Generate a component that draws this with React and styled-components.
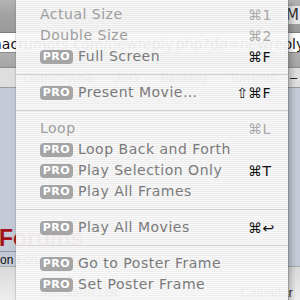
import React from 'react';
import styled, { createGlobalStyle } from 'styled-components';

const Global = createGlobalStyle`
  html, body { margin: 0; padding: 0; background: #c3cad6; }
  body { font-family: "DejaVu Sans", "Liberation Sans", sans-serif; }
`;

const Screen = styled.div`
  position: relative;
  width: 300px;
  height: 300px;
  overflow: hidden;
`;

const Browser = styled.div`
  display: flex;
  flex-direction: column;
  width: 300px;
  height: 300px;
`;

const Toolbar = styled.div`
  height: 32px;
  box-sizing: border-box;
  padding-top: 6px;
  display: flex;
  justify-content: flex-end;
  align-items: flex-start;
  background: linear-gradient(to bottom, #b4b4b4 0%, #a2a2a2 45%, #9a9a9a 100%);
`;

const SearchField = styled.div`
  width: 14px;
  height: 18px;
  overflow: hidden;
  background: #e6e6e6;
  color: #333;
  font-size: 15px;
  line-height: 18px;
  padding-left: 1px;
`;

const UrlRow = styled.div`
  height: 21px;
  box-sizing: border-box;
  background: #ffffff;
  border-top: 1px solid #7e7e7e;
  border-bottom: 1px solid #8a8a8a;
  overflow: hidden;
  white-space: nowrap;
  padding-top: 4px;
`;

const UrlText = styled.div`
  font-family: "DejaVu Sans", sans-serif;
  font-size: 14px;
  line-height: 14px;
  color: #111;
  margin-left: -12px;
  letter-spacing: 0.1px;
`;

const ToolStrip = styled.div`
  height: 14px;
  background: linear-gradient(to bottom, #b0b0b0, #a4a4a4);
  border-bottom: 1px solid #8c8c8c;
`;

const BookmarksBar = styled.div`
  height: 20px;
  box-sizing: border-box;
  display: flex;
  align-items: center;
  background: #dedede;
  border-bottom: 1px solid #9a9a9a;
  font-family: "Liberation Sans", sans-serif;
  font-size: 13px;
  color: #222;
  white-space: nowrap;
  overflow: hidden;
`;

const Bookmark = styled.span`
  margin-left: ${p => p.$gap}px;
`;

const Content = styled.div`
  flex: 1;
  background: #c3cad6;
  padding-top: 137px;
  box-sizing: border-box;
  overflow: hidden;
`;

const ForumTitle = styled.div`
  font-family: "Liberation Sans", sans-serif;
  font-weight: bold;
  font-size: 23px;
  line-height: 26px;
  color: #a3121a;
  margin-left: -1px;
`;

const Rule = styled.div`
  width: 78px;
  height: 1px;
  background: #8d96a6;
`;

const SubTitle = styled.div`
  font-family: "Liberation Sans", sans-serif;
  font-size: 12px;
  line-height: 14px;
  color: #111;
  margin-top: 1px;
`;

const Footer = styled.div`
  height: 34px;
  box-sizing: border-box;
  background: linear-gradient(to bottom, #dadada, #ededed);
  border-top: 1px solid #a9a9a9;
  display: flex;
  align-items: flex-end;
  font-family: "Liberation Sans", sans-serif;
  font-size: 13px;
  color: #333;
  white-space: nowrap;
  overflow: hidden;
  padding-bottom: 1px;
`;

const FooterLink = styled.span`
  margin-left: ${p => p.$gap}px;
  line-height: 13px;
`;

const Menu = styled.div`
  position: absolute;
  left: 16px;
  top: 0;
  width: 272px;
  height: 320px;
  padding-top: 4px;
  box-sizing: border-box;
  background: repeating-linear-gradient(
    to bottom,
    rgba(250, 250, 250, 0.95) 0px,
    rgba(250, 250, 250, 0.95) 1px,
    rgba(239, 239, 239, 0.95) 1px,
    rgba(239, 239, 239, 0.95) 2px
  );
  box-shadow: 1px 0 0 rgba(120, 120, 120, 0.45), -1px 0 0 rgba(120, 120, 120, 0.2), 3px 2px 6px rgba(0, 0, 0, 0.25);
  font-family: "DejaVu Sans", "Liberation Sans", sans-serif;
  font-size: 14px;
`;

const Item = styled.div`
  height: 21px;
  display: flex;
  align-items: center;
  padding-left: 24px;
  white-space: nowrap;
`;

const Badge = styled.span`
  display: inline-flex;
  align-items: center;
  justify-content: center;
  width: 33px;
  height: 14px;
  border-radius: 4px;
  background: #a5a5a5;
  color: #ffffff;
  font-size: 11px;
  font-weight: bold;
  letter-spacing: 0.5px;
  margin-right: 5px;
  flex: none;
`;

const Label = styled.span`
  flex: 1;
  color: ${p => (p.$disabled ? '#9d9d9d' : '#7a7a7a')};
  line-height: 21px;
  letter-spacing: 0.5px;
`;

const Mod = styled.span`
  width: 16px;
  text-align: right;
  color: ${p => (p.$on ? '#111' : '#a9a9a9')};
`;

const Keys = styled.span`
  width: 40px;
  letter-spacing: 0.5px;
  color: ${p => (p.$on ? '#111' : '#a9a9a9')};
`;

const Separator = styled.div`
  height: 15px;
  display: flex;
  align-items: center;
  &::after {
    content: '';
    display: block;
    width: 100%;
    height: 1px;
    background: #d0d0d0;
  }
`;

const items = [
  { label: 'Actual Size', key: '1', disabled: true },
  { label: 'Double Size', key: '2', disabled: true },
  { label: 'Full Screen', pro: true, key: 'F' },
  'sep',
  { label: 'Present Movie…', pro: true, mod: '⇧', key: 'F' },
  'sep',
  { label: 'Loop', key: 'L', disabled: true },
  { label: 'Loop Back and Forth', pro: true },
  { label: 'Play Selection Only', pro: true, key: 'T' },
  { label: 'Play All Frames', pro: true },
  'sep',
  { label: 'Play All Movies', pro: true, key: '↩' },
  'sep',
  { label: 'Go to Poster Frame', pro: true },
  { label: 'Set Poster Frame', pro: true },
];

export default function App() {
  return (
    <Screen>
      <Global />
      <Browser>
        <Toolbar>
          <SearchField>M</SearchField>
        </Toolbar>
        <UrlRow>
          <UrlText>macrumors.com/newreply.php?do=newreply&amp;noquote=1</UrlText>
        </UrlRow>
        <ToolStrip />
        <BookmarksBar>
          <Bookmark $gap={23}>Gamehouse</Bookmark>
          <Bookmark $gap={20}>JSG</Bookmark>
          <Bookmark $gap={21}>Banking</Bookmark>
          <Bookmark $gap={22}>Torrents</Bookmark>
          <Bookmark $gap={14}>–</Bookmark>
        </BookmarksBar>
        <Content>
          <ForumTitle>Forums</ForumTitle>
          <Rule />
          <SubTitle>on Forums</SubTitle>
        </Content>
        <Footer>
          <FooterLink $gap={40}>Members List</FooterLink>
          <FooterLink $gap={122}>Calendar</FooterLink>
        </Footer>
      </Browser>
      <Menu>
        {items.map((it, i) =>
          it === 'sep' ? (
            <Separator key={i} />
          ) : (
            <Item key={i}>
              {it.pro && <Badge>PRO</Badge>}
              <Label $disabled={it.disabled}>{it.label}</Label>
              <Mod $on={!it.disabled}>{it.mod || ''}</Mod>
              <Keys $on={!it.disabled}>{it.key ? `⌘${it.key}` : ''}</Keys>
            </Item>
          )
        )}
      </Menu>
    </Screen>
  );
}
